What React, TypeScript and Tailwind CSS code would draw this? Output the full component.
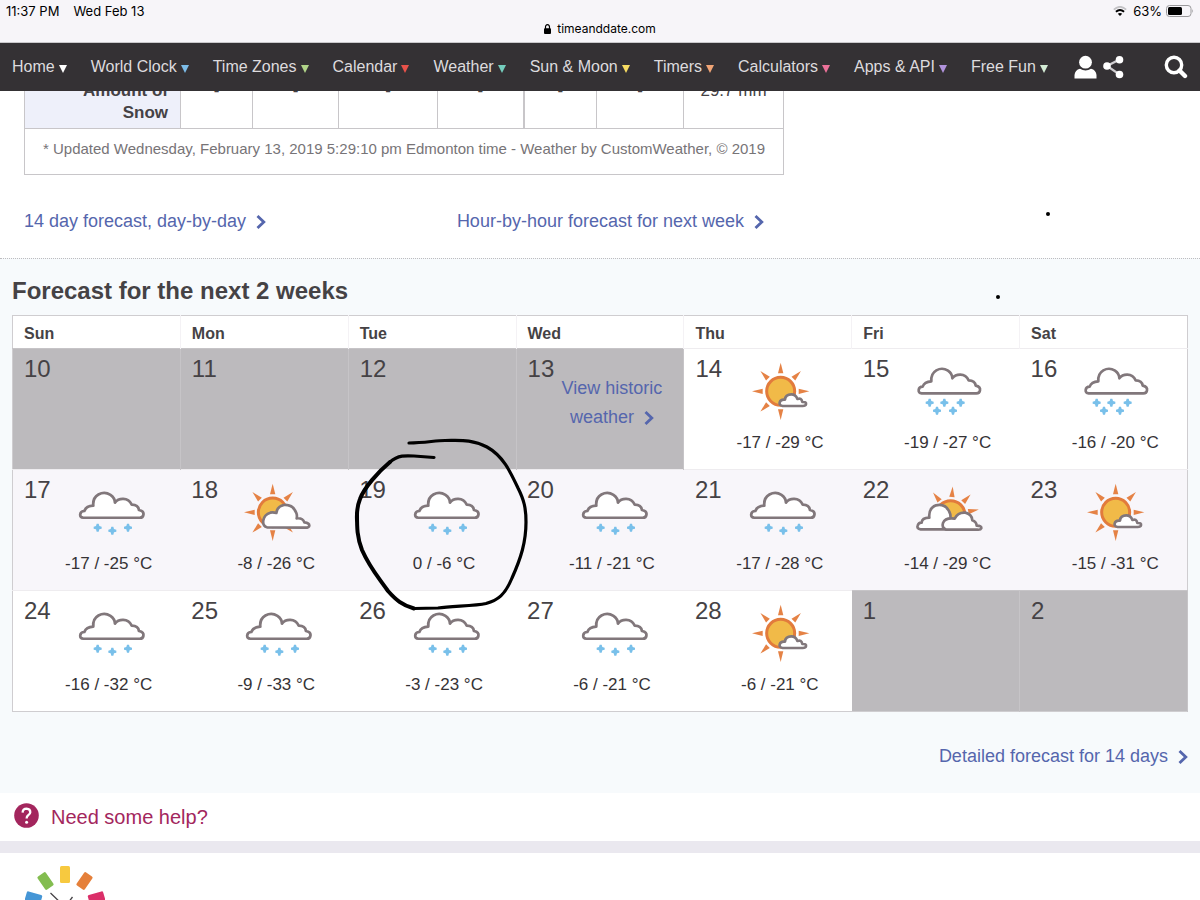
import React from "react";

type WeatherKind = "sun" | "sunCloud" | "clouds" | "snow" | "heavySnow";

interface Day {
  day: number;
  kind?: WeatherKind;
  temp?: string;
  historic?: boolean;
}

const navItems = [
  { label: "Home", color: "#ffffff" },
  { label: "World Clock", color: "#7cbce8" },
  { label: "Time Zones", color: "#b0d488" },
  { label: "Calendar", color: "#e8524a" },
  { label: "Weather", color: "#74cdbd" },
  { label: "Sun & Moon", color: "#f7dc62" },
  { label: "Timers", color: "#f0a475" },
  { label: "Calculators", color: "#ec7199" },
  { label: "Apps & API", color: "#b193dc" },
  { label: "Free Fun", color: "#d3ecd5" },
];

const weekDays = ["Sun", "Mon", "Tue", "Wed", "Thu", "Fri", "Sat"];

const weeks: Day[][] = [
  [
    { day: 10 },
    { day: 11 },
    { day: 12 },
    { day: 13, historic: true },
    { day: 14, kind: "sun", temp: "-17 / -29 °C" },
    { day: 15, kind: "heavySnow", temp: "-19 / -27 °C" },
    { day: 16, kind: "heavySnow", temp: "-16 / -20 °C" },
  ],
  [
    { day: 17, kind: "snow", temp: "-17 / -25 °C" },
    { day: 18, kind: "sunCloud", temp: "-8 / -26 °C" },
    { day: 19, kind: "snow", temp: "0 / -6 °C" },
    { day: 20, kind: "snow", temp: "-11 / -21 °C" },
    { day: 21, kind: "snow", temp: "-17 / -28 °C" },
    { day: 22, kind: "clouds", temp: "-14 / -29 °C" },
    { day: 23, kind: "sun", temp: "-15 / -31 °C" },
  ],
  [
    { day: 24, kind: "snow", temp: "-16 / -32 °C" },
    { day: 25, kind: "snow", temp: "-9 / -33 °C" },
    { day: 26, kind: "snow", temp: "-3 / -23 °C" },
    { day: 27, kind: "snow", temp: "-6 / -21 °C" },
    { day: 28, kind: "sun", temp: "-6 / -21 °C" },
    { day: 1 },
    { day: 2 },
  ],
];

const BIG_CLOUD =
  "M66 127 Q56 126 57 117 Q58 107 69 107 Q74 92 95 91 Q93 68 110 58 Q128 48 145 59 Q158 68 158 82 C168 68 196 64 207 88 Q226 88 228 104 Q243 107 241 118 Q240 127 230 127 Z";

const Flakes = ({ points }: { points: number[][] }) => (
  <g fill="#79c0ea">
    {points.map(([x, y]) => (
      <path
        key={`${x}-${y}`}
        transform={`translate(${x} ${y})`}
        d="M-3 -12 L3 -12 L5 -5 L12 -3 L12 3 L5 5 L3 12 L-3 12 L-5 5 L-12 3 L-12 -3 L-5 -5 Z"
      />
    ))}
  </g>
);

const Sun = ({ x, y, r, angles }: { x: number; y: number; r: number; angles: number[] }) => (
  <g transform={`translate(${x} ${y})`}>
    {angles.map((a) => (
      <path key={a} transform={`rotate(${a})`} d="M-8 -54 L0 -86 L8 -54 Z" fill="#e58245" />
    ))}
    <circle r={r} fill="#f1ba48" stroke="#e27b3c" strokeWidth="9" />
  </g>
);

const WeatherIcon = ({ kind }: { kind: WeatherKind }) => {
  const cloud = { fill: "#fff", stroke: "#81777b", strokeWidth: 8, strokeLinejoin: "round" as const };

  if (kind === "heavySnow") {
    return (
      <svg className="h-[60px] w-20" viewBox="25 30 240 180" role="img" aria-label="Snow">
        <path d={BIG_CLOUD} {...cloud} />
        <Flakes points={[[90, 155], [134, 155], [183, 155], [112, 179], [160, 179]]} />
      </svg>
    );
  }
  if (kind === "snow") {
    return (
      <svg className="h-[60px] w-20" viewBox="13 15 240 180" role="img" aria-label="Light snow">
        <path d={BIG_CLOUD} transform="translate(-12 -6) scale(1.03 1.01)" {...cloud} />
        <Flakes points={[[99, 152], [143, 161], [190, 152]]} />
      </svg>
    );
  }
  if (kind === "sun") {
    return (
      <svg className="h-[60px] w-20" viewBox="2 30 240 180" role="img" aria-label="Mostly sunny">
        <Sun x={124} y={121} r={42} angles={[0, 45, 90, 180, 225, 270, 315]} />
        <path
          d="M130 165 Q119 163 121 154 Q124 144 137 146 Q138 130 156 130 Q170 130 174 144 Q186 139 189 153 Q202 152 200 160 Q199 165 190 165 Z"
          {...cloud}
        />
      </svg>
    );
  }
  if (kind === "sunCloud") {
    return (
      <svg className="h-[60px] w-20" viewBox="7 15 240 180" role="img" aria-label="Partly sunny">
        <Sun x={117} y={106} r={43} angles={[0, 45, 135, 180, 225, 270, 315]} />
        <path
          d="M100 151 Q86 147 89 130 Q92 112 110 107 Q118 105 128 108 Q130 88 151 84 Q178 82 188 108 Q191 116 189 124 Q207 122 212 136 Q227 137 227 146 Q226 152 215 152 Z"
          {...cloud}
        />
      </svg>
    );
  }
  return (
    <svg className="h-[60px] w-20" viewBox="10 15 240 180" role="img" aria-label="Mostly cloudy">
      <Sun x={138} y={114} r={43} angles={[4, 44, 79, 322]} />
      <path
        d="M48 157 Q36 155 39 146 Q42 136 51 137 Q52 122 74 122 Q71 94 94 85 Q126 78 137 112 L140 157 Z"
        {...cloud}
      />
      <path
        d="M125 158 Q110 152 115 138 Q122 121 150 125 Q160 105 182 107 Q202 112 203 130 Q215 134 216 146 Q232 146 230 154 Q228 159 218 158 Z"
        {...cloud}
      />
    </svg>
  );
};

const Chevron = () => (
  <svg className="ml-2.5 inline-block h-3.5 w-2.5" viewBox="0 0 10 14" fill="none" aria-hidden="true">
    <path d="M1.5 1 L7.8 7 L1.5 13" stroke="#5566ad" strokeWidth="2.8" />
  </svg>
);

const StatusBar = () => (
  <div className="border-b border-[#c9c8cb] bg-[#f7f5f9] pt-px font-['Inter',sans-serif] text-[13px] text-black">
    <div className="flex items-center justify-between px-1.5 leading-5">
      <div className="flex gap-3.5">
        <span>11:37 PM</span>
        <span>Wed Feb 13</span>
      </div>
      <div className="flex items-center gap-1.5">
        <svg className="h-2.5 w-3.5" viewBox="0 0 14 10" fill="none" aria-hidden="true">
          <path d="M0.8 3.6 Q7 -2 13.2 3.6" stroke="#c4c3c6" strokeWidth="1.7" />
          <path d="M2.9 5.8 Q7 2.2 11.1 5.8" stroke="#000" strokeWidth="1.8" />
          <path d="M7 10 L4.8 7.8 Q7 6 9.2 7.8 Z" fill="#000" />
        </svg>
        <span>63%</span>
        <svg className="-ml-0.5 h-3 w-7" viewBox="0 0 28 12" aria-hidden="true">
          <rect x="0.5" y="0.5" width="24.5" height="11" rx="3" fill="none" stroke="#9a999c" />
          <rect x="2" y="2" width="14" height="8" rx="1.5" />
          <path d="M26.3 4 Q28 6 26.3 8 Z" fill="#9a999c" />
        </svg>
      </div>
    </div>
    <div className="flex items-center justify-center gap-1.5 pb-[5px] text-xs leading-4">
      <svg className="h-2.5 w-[7px]" viewBox="0 0 7 10" aria-hidden="true">
        <rect y="4.2" width="7" height="5.8" rx="1" />
        <path d="M1.5 5 V3 Q1.5 0.7 3.5 0.7 Q5.5 0.7 5.5 3 V5" fill="none" stroke="#000" strokeWidth="1.2" />
      </svg>
      <span>timeanddate.com</span>
    </div>
  </div>
);

const NavBar = () => (
  <nav className="flex h-12 items-center bg-[#343134] px-3 text-base text-[#dddbde]">
    <ul className="flex items-center gap-6 whitespace-nowrap">
      {navItems.map((item) => (
        <li key={item.label}>
          <a href="#" className="flex items-center gap-1">
            {item.label}
            <svg className="mt-1 h-2 w-2" viewBox="0 0 8 8" aria-hidden="true">
              <path d="M0 0 H8 L4 8 Z" fill={item.color} />
            </svg>
          </a>
        </li>
      ))}
    </ul>
    <div className="ml-[26px] flex gap-1.5">
      <button type="button" aria-label="Account">
        <svg className="block h-6 w-[23px]" viewBox="0 0 23 24" fill="#fff" aria-hidden="true">
          <circle cx="11.5" cy="7.2" r="6.4" />
          <path d="M0.5 23.5 V20 Q1 15 6 13.8 Q11.5 17 17 13.8 Q22 15 22.5 20 V23.5 Z" />
        </svg>
      </button>
      <button type="button" aria-label="Share">
        <svg className="block h-6 w-[21px]" viewBox="0 0 21 24" fill="#fff" aria-hidden="true">
          <path d="M16.5 4.5 L4 11 L16.5 19.5" fill="none" stroke="#cfcdd0" strokeWidth="2.2" />
          <circle cx="16.5" cy="4.8" r="3.8" />
          <circle cx="4" cy="11" r="3.8" />
          <circle cx="16.5" cy="19.5" r="3.8" />
        </svg>
      </button>
    </div>
    <button type="button" aria-label="Search" className="ml-auto">
      <svg className="block h-6 w-6" viewBox="0 0 24 24" fill="none" stroke="#fff" aria-hidden="true">
        <circle cx="10" cy="10" r="7.7" strokeWidth="3.4" />
        <path d="M15.5 15.5 L21 21" strokeWidth="4.4" strokeLinecap="round" />
      </svg>
    </button>
  </nav>
);

const SnowTable = () => (
  <div className="flex h-[84px] flex-col justify-end overflow-hidden pl-6">
    <table className="w-[760px] table-fixed border-collapse text-center text-[#454245]">
      <colgroup>
        <col className="w-[156px]" />
        <col className="w-[72px]" />
        <col className="w-[86px]" />
        <col className="w-[99px]" />
        <col className="w-[86px]" />
        <col className="w-[73px]" />
        <col className="w-[87px]" />
        <col />
      </colgroup>
      <tbody>
        <tr className="align-top text-[17px] leading-[22px]">
          <th className="border border-[#c8c6c9] bg-[#eef0fa] pr-3 pb-1 pl-10 text-right">Amount of Snow</th>
          <td className="border border-[#c8c6c9]">-</td>
          <td className="border border-[#c8c6c9]">-</td>
          <td className="border border-[#c8c6c9]">-</td>
          <td className="border border-r-2 border-[#c8c6c9]">-</td>
          <td className="border border-[#c8c6c9]">-</td>
          <td className="border border-[#c8c6c9]">-</td>
          <td className="border border-[#c8c6c9]">29.7 mm</td>
        </tr>
        <tr>
          <td colSpan={8} className="h-[46px] border border-[#c8c6c9] pb-1 text-[15px] text-[#777477]">
            * Updated Wednesday, February 13, 2019 5:29:10 pm Edmonton time - Weather by CustomWeather, © 2019
          </td>
        </tr>
      </tbody>
    </table>
  </div>
);

const DayCell = ({ day, kind, temp, historic }: Day) => (
  <div className="flex h-[120px]">
    <div className="w-[39px] shrink-0 pt-1 pl-[11px] text-2xl text-[#454245]">{day}</div>
    <div className="flex-1 pr-[15px] text-center">
      {kind && (
        <div className="flex flex-col items-center pt-3">
          <WeatherIcon kind={kind} />
          <span className="mt-2.5 text-[17px] leading-6 whitespace-nowrap text-[#353235]">{temp}</span>
        </div>
      )}
      {historic && (
        <a href="#" className="block pt-[25px] text-lg leading-[29px] whitespace-nowrap text-[#5566ad]">
          View historic
          <br />
          weather
          <Chevron />
        </a>
      )}
    </div>
  </div>
);

const Forecast = () => (
  <section className="border-t border-dotted border-[#bdbcbf] bg-[#f7fafc] px-3 pb-[23px]">
    <h2 className="pt-4 text-2xl font-bold text-[#454245]">Forecast for the next 2 weeks</h2>
    <table className="mt-2 w-full table-fixed border-collapse border border-[#cfcdd0] bg-white">
      <thead>
        <tr>
          {weekDays.map((name) => (
            <th
              key={name}
              className="h-[33px] border-r border-[#f4f2f5] pt-1 pl-[11px] text-left text-base text-[#454245] last:border-r-0"
            >
              {name}
            </th>
          ))}
        </tr>
      </thead>
      <tbody>
        {weeks.map((week, i) => (
          <tr key={i} className={i === 1 ? "bg-[#f8f6fa]" : ""}>
            {week.map((d) => (
              <td
                key={d.day}
                className={
                  d.kind
                    ? "border-t border-[#eeecef] p-0 align-top"
                    : "border-t border-r border-[#c6c4c7] bg-[#bcbabd] p-0 align-top"
                }
              >
                <DayCell {...d} />
              </td>
            ))}
          </tr>
        ))}
      </tbody>
    </table>
    <div className="mt-[30px] text-right text-lg text-[#5566ad]">
      <a href="#">
        Detailed forecast for 14 days
        <Chevron />
      </a>
    </div>
  </section>
);

const Logo = () => (
  <svg className="h-12 w-20" viewBox="0 0 80 48" aria-label="timeanddate" role="img">
    <rect x="35" y="13" width="10" height="17" rx="1.5" fill="#f7c93f" />
    <rect x="-5" y="-8" width="10" height="16" rx="1.5" fill="#83bd50" transform="translate(20.5 28) rotate(-35)" />
    <rect x="-5" y="-8" width="10" height="16" rx="1.5" fill="#e5803a" transform="translate(59.5 28) rotate(35)" />
    <rect x="-5" y="-8" width="10" height="16" rx="1.5" fill="#4596d6" transform="translate(8.5 45) rotate(-74)" />
    <rect x="-5" y="-8" width="10" height="16" rx="1.5" fill="#db2f69" transform="translate(71.5 45) rotate(74)" />
    <path d="M25.5 40 L40 54 L47.5 44" fill="none" stroke="#454245" strokeWidth="1.3" />
  </svg>
);

// pen strokes drawn over the page
const Annotations = () => (
  <div className="pointer-events-none" aria-hidden="true">
    <svg
      className="absolute top-[430px] left-[340px] h-[190px] w-[200px]"
      viewBox="0 0 200 190"
      fill="none"
      stroke="#000"
      strokeLinecap="round"
      strokeLinejoin="round"
    >
      <path
        d="M69 13 C85 13 95 10.5 105 10.5 C120 10.5 132 9 147 17 C163 26 170 41 178 58 C184 70 186 78 186 92 C186 112 181 128 172 148 C165 165 158 170 146 173.5 C135 176 112 176 98 178 L74 178.5"
        strokeWidth="3.2"
      />
      <path d="M74 178.5 C62 175 56 170 48 161 C36 144 30 138 22 120 C17 107 17 98 17 84" strokeWidth="4" />
      <path d="M17 90 C16.5 80 18 74 20 69 C24 58 38 42 50 32" strokeWidth="4" />
      <path d="M50 32 C58 25 66 25.5 74 26 L94 27.5" strokeWidth="3.2" />
    </svg>
    <span className="absolute top-[212px] left-[1046px] size-1 rounded-full bg-black" />
    <span className="absolute top-[295px] left-[996px] size-1 rounded-full bg-black" />
  </div>
);

const App = () => {
  return (
    <div className="relative min-h-screen overflow-hidden bg-white font-['Liberation_Sans',Arial,sans-serif]">
      <StatusBar />
      <NavBar />
      <main>
        <SnowTable />
        <div className="flex w-[792px] justify-between pt-8 pr-7 pb-[23px] pl-6 text-lg text-[#5566ad]">
          <a href="#">
            14 day forecast, day-by-day
            <Chevron />
          </a>
          <a href="#">
            Hour-by-hour forecast for next week
            <Chevron />
          </a>
        </div>
        <Forecast />
        <div className="flex h-12 items-center gap-3 px-3.5">
          <svg className="mb-1 size-[25px]" viewBox="0 0 25 25" aria-hidden="true">
            <circle cx="12.5" cy="12.5" r="12.3" fill="#a3265d" />
            <path
              d="M8.6 9.6 Q8.8 5.7 12.6 5.7 Q16.3 5.9 16.3 9.2 Q16.2 11 14.2 12.2 Q12.6 13.2 12.6 15.6"
              fill="none"
              stroke="#fff"
              strokeWidth="2.3"
            />
            <circle cx="12.6" cy="19.2" r="1.5" fill="#fff" />
          </svg>
          <a href="#" className="text-xl text-[#a3265d]">
            Need some help?
          </a>
        </div>
      </main>
      <footer className="h-[59px] overflow-hidden border-t-12 border-[#eae8ef] pl-[25px]">
        <Logo />
      </footer>
      <Annotations />
    </div>
  );
};

export default App;
